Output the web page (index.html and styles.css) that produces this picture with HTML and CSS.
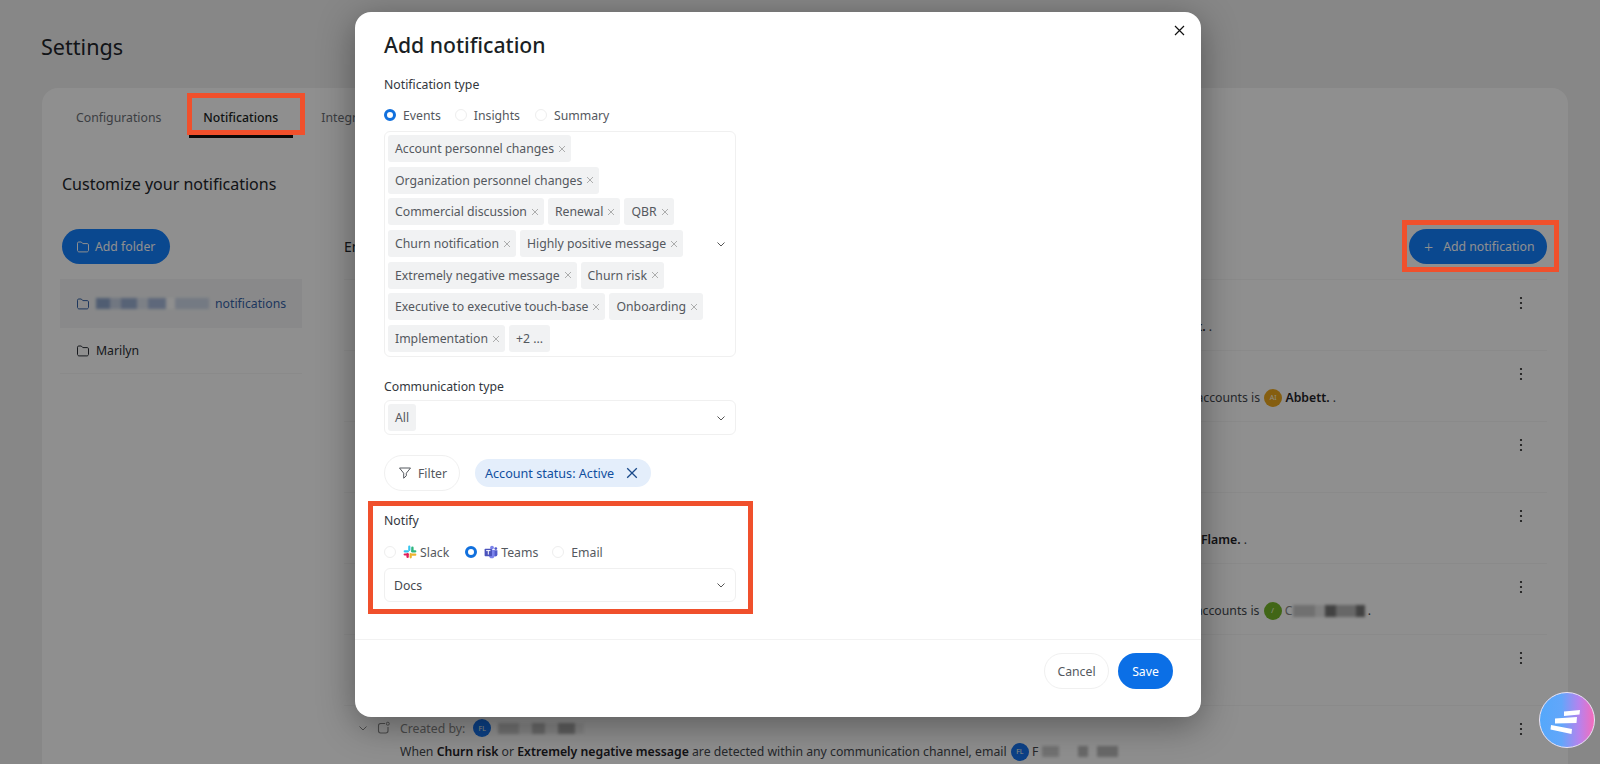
FILE: index.html
```html
<!DOCTYPE html>
<html lang="en">
<head>
<meta charset="utf-8">
<title>Settings - Add notification</title>
<link rel="stylesheet" href="styles.css">
</head>
<body>
<svg class="defs" width="0" height="0" aria-hidden="true">
  <symbol id="folder" viewBox="0 0 14 14"><path d="M1.500 3.200c0-.7.5-1.200 1.200-1.200h2.600l1.500 1.600h4.500c.7 0 1.200.5 1.200 1.200v5.500c0 .9-.7 1.600-1.600 1.600H3.100c-.9 0-1.600-.7-1.600-1.600z" fill="none" stroke="currentColor" stroke-width="1" stroke-linejoin="round"/></symbol>
  <symbol id="chev" viewBox="0 0 10 10"><path d="M1.500 3.500 5 7l3.500-3.500" fill="none" stroke="currentColor" stroke-width="1"/></symbol>
  <symbol id="x" viewBox="0 0 10 10"><path d="M2 2l6 6M8 2l-6 6" fill="none" stroke="currentColor" stroke-width=".8"/></symbol>
  <symbol id="dots" viewBox="0 0 4 14"><circle cx="2" cy="2" r="1.100"/><circle cx="2" cy="7" r="1.100"/><circle cx="2" cy="12" r="1.100"/></symbol>
  <symbol id="bell" viewBox="0 0 14 14"><path d="M8 2.500H3.700C2.500 2.500 1.500 3.500 1.500 4.700v5.100c0 1.200 1 2.200 2.200 2.200h5.100c1.200 0 2.200-1 2.200-2.200V6" fill="none" stroke="currentColor" stroke-width="1.100"/><circle cx="10.800" cy="2.700" r="1.500" fill="none" stroke="currentColor" stroke-width="1"/></symbol>
</svg>

<div class="page">
  <h1 class="page-title">Settings</h1>
  <section class="panel">
    <nav class="tabs">
      <span class="tab">Configurations</span>
      <span class="tab tab-active">Notifications<i class="mark mark-tab"></i></span>
      <span class="tab">Integrations</span>
    </nav>
    <div class="columns">
      <aside class="side">
        <h2 class="side-title">Customize your notifications</h2>
        <button class="btn-primary btn-folder"><svg class="ico14"><use href="#folder"/></svg>Add folder</button>
        <ul class="folders">
          <li class="folder folder-on"><svg class="ico14"><use href="#folder"/></svg><span class="smudge smudge-a"></span><span>notifications</span></li>
          <li class="folder folder-plain"><svg class="ico14"><use href="#folder"/></svg><span>Marilyn</span></li>
        </ul>
      </aside>
      <div class="main">
        <div class="toolbar">
          <span class="main-title">En</span>
          <button class="btn-primary btn-add"><span class="plus">+</span>Add notification<i class="mark mark-add"></i></button>
        </div>
        <div class="row">
          <div class="row-body"><div class="desc end-1"><b>Scott.</b>&nbsp;.</div></div>
          <svg class="kebab"><use href="#dots"/></svg>
        </div>
        <div class="row">
          <div class="row-body"><div class="desc end-2">accounts is <span class="avatar av-amber">AI</span>&nbsp;<b>Abbett.</b>&nbsp;.</div></div>
          <svg class="kebab"><use href="#dots"/></svg>
        </div>
        <div class="row">
          <div class="row-body"></div>
          <svg class="kebab"><use href="#dots"/></svg>
        </div>
        <div class="row">
          <div class="row-body"><div class="desc end-4"><b>Flame.</b>&nbsp;.</div></div>
          <svg class="kebab"><use href="#dots"/></svg>
        </div>
        <div class="row">
          <div class="row-body"><div class="desc end-5">accounts is <span class="avatar av-green">/</span>&nbsp;<span class="letter">C</span><span class="smudge smudge-b"></span>&nbsp;.</div></div>
          <svg class="kebab"><use href="#dots"/></svg>
        </div>
        <div class="row">
          <div class="row-body"></div>
          <svg class="kebab"><use href="#dots"/></svg>
        </div>
        <div class="row">
          <div class="row-body row-body-full">
            <div class="meta"><svg class="ico10"><use href="#chev"/></svg><svg class="ico14"><use href="#bell"/></svg><span>Created by:</span><span class="avatar av-blue">FL</span><span class="smudge smudge-c"></span></div>
            <div class="desc desc-start">When&nbsp;<b>Churn risk</b>&nbsp;or&nbsp;<b>Extremely negative message</b>&nbsp;are detected within any communication channel, email <span class="avatar av-blue">FL</span>&nbsp;F<span class="smudge smudge-d"></span></div>
          </div>
          <svg class="kebab"><use href="#dots"/></svg>
        </div>
      </div>
    </div>
  </section>
</div>

<div class="overlay">
  <div class="modal" role="dialog" aria-label="Add notification">
    <div class="modal-body">
      <svg class="close"><use href="#x"/></svg>
      <h2 class="modal-title">Add notification</h2>
      <div class="label">Notification type</div>
      <div class="radios radios-type">
        <label class="radio-item item-events"><i class="radio radio-on"></i>Events</label>
        <label class="radio-item item-insights"><i class="radio"></i>Insights</label>
        <label class="radio-item"><i class="radio"></i>Summary</label>
      </div>
      <div class="select select-multi">
        <div class="tags">
          <span class="tag">Account personnel changes<svg class="tag-x"><use href="#x"/></svg></span>
          <span class="tag">Organization personnel changes<svg class="tag-x"><use href="#x"/></svg></span>
          <span class="tag">Commercial discussion<svg class="tag-x"><use href="#x"/></svg></span>
          <span class="tag">Renewal<svg class="tag-x"><use href="#x"/></svg></span>
          <span class="tag">QBR<svg class="tag-x"><use href="#x"/></svg></span>
          <span class="tag">Churn notification<svg class="tag-x"><use href="#x"/></svg></span>
          <span class="tag">Highly positive message<svg class="tag-x"><use href="#x"/></svg></span>
          <span class="tag">Extremely negative message<svg class="tag-x"><use href="#x"/></svg></span>
          <span class="tag">Churn risk<svg class="tag-x"><use href="#x"/></svg></span>
          <span class="tag">Executive to executive touch-base<svg class="tag-x"><use href="#x"/></svg></span>
          <span class="tag">Onboarding<svg class="tag-x"><use href="#x"/></svg></span>
          <span class="tag">Implementation<svg class="tag-x"><use href="#x"/></svg></span>
          <span class="tag">+2 ...</span>
        </div>
        <svg class="chev"><use href="#chev"/></svg>
      </div>
      <div class="label label-comm">Communication type</div>
      <div class="select select-one">
        <div class="tags"><span class="tag">All</span></div>
        <svg class="chev"><use href="#chev"/></svg>
      </div>
      <div class="filters">
        <button class="btn-filter"><svg class="ico14" viewBox="0 0 14 14"><path d="M1.500 2h11L8.300 7.200v2.600L5.700 12.200V7.200z" fill="none" stroke="currentColor" stroke-width="1" stroke-linejoin="round"/></svg>Filter</button>
        <span class="chip">Account status: Active<svg class="chip-x"><use href="#x"/></svg></span>
      </div>
      <div class="notify">
        <i class="mark mark-notify"></i>
        <div class="label">Notify</div>
        <div class="radios radios-notify">
          <label class="radio-item item-slack"><i class="radio"></i>
            <svg class="brand" viewBox="0 0 14 14"><rect x="5.200" y=".6" width="2.200" height="5.400" rx="1.100" fill="#36c5f0"/><rect x=".6" y="5.200" width="5.400" height="2.200" rx="1.100" fill="#36c5f0"/><rect x="8.200" y="1.600" width="2.400" height="5" rx="1.200" fill="#2eb67d"/><rect x="8" y="5.200" width="5.400" height="2.200" rx="1.100" fill="#2eb67d"/><rect x="6.600" y="8" width="2.200" height="5.400" rx="1.100" fill="#ecb22e"/><rect x="8" y="8.600" width="5.400" height="2.200" rx="1.100" fill="#ecb22e"/><rect x="3.400" y="8" width="2.400" height="5" rx="1.200" fill="#e01e5a"/><rect x=".6" y="8.400" width="5" height="2.200" rx="1.100" fill="#e01e5a"/></svg>Slack</label>
          <label class="radio-item item-teams"><i class="radio radio-on"></i>
            <svg class="brand" viewBox="0 0 14 14"><circle cx="8" cy="2.600" r="1.900" fill="#7b83eb"/><circle cx="11.800" cy="3.600" r="1.400" fill="#5059c9"/><path d="M9.400 5.200h4v4.200a2 2 0 0 1-4 0z" fill="#5059c9"/><path d="M5 5h5.600v5.400a2.800 2.800 0 0 1-5.600 0z" fill="#7b83eb"/><rect x=".6" y="3.800" width="7.400" height="7.400" rx=".8" fill="#4b53bc"/><path d="M2.200 5.600h4.200M4.300 5.600v4" stroke="#fff" stroke-width="1"/></svg>Teams</label>
          <label class="radio-item"><i class="radio"></i>Email</label>
        </div>
        <div class="select select-docs">
          <span class="docs-value">Docs</span>
          <svg class="chev"><use href="#chev"/></svg>
        </div>
      </div>
    </div>
    <div class="modal-foot">
      <button class="btn-cancel">Cancel</button>
      <button class="btn-save">Save</button>
    </div>
  </div>
</div>

<div class="fab" aria-label="Assistant">
  <svg viewBox="0 0 56 56" width="56" height="56"><path d="M25 19.500 41 18l-.5 4.500L25 24zM16 26.500 38 25l-.5 6-21.500.5zM12 33l21 4-.5 5-21-4.500z" fill="#fff"/></svg>
</div>
</body>
</html>
```
FILE: styles.css
```css
* { box-sizing: border-box; }
html, body { margin: 0; height: 100%; }
body {
  overflow: hidden;
  height: 764px;
  background: #f1f1f1;
  font-family: "Noto Sans", "Liberation Sans", sans-serif;
  font-size: 12.25px;
  color: #21252b;
}
.defs { position: absolute; }
button { font: inherit; border: 0; cursor: pointer; }
h1, h2, ul { margin: 0; padding: 0; }
li { list-style: none; }

.page { padding: 33px 32px 0 42px; }
.page-title { font-size: 21.6px; font-weight: 400; line-height: 28px; margin-left: -1px; }
.panel {
  margin-top: 27px;
  height: 700px;
  background: #fff;
  border-radius: 16px;
}
.tabs { display: flex; padding-left: 34px; height: 50px; align-items: flex-end; }
.tab { position: relative; color: #6b6f76; padding-bottom: 11px; line-height: 18px; margin-right: 28px; white-space: nowrap; }
.tab-active {
  color: #1b1f24; font-weight: 500; width: 104px; padding: 0 0 8px 14px;
  border-bottom: 3px solid #111;
}
.mark { position: absolute; display: block; border: 5px solid #f0502c; z-index: 30; pointer-events: none; }
.mark-tab { left: -2px; right: -12px; top: -16px; bottom: 0; }
.mark-add { left: -7px; right: -12px; top: -9px; bottom: -8px; }
.mark-notify { left: -16px; right: -17px; top: -11px; bottom: -12px; }

.columns { display: flex; padding-left: 20px; }
.side { width: 240px; flex: none; margin-right: 42px; }
.side-title { font-size: 16px; font-weight: 400; line-height: 22px; margin-top: 35px; white-space: nowrap; }
.btn-primary {
  position: relative;
  display: inline-flex; align-items: center; height: 35px; border-radius: 18px;
  background: #1280ff; color: #fff; font-size: 12.25px; white-space: nowrap;
}
.btn-folder { margin-top: 34px; padding: 0 14px; gap: 5px; width: 108px; }
.ico14 { width: 14px; height: 14px; flex: none; }
.ico10 { width: 10px; height: 10px; flex: none; }
.folders { margin-top: 15px; margin-left: -2px; border-bottom: 1px solid #f6f6f6; }
.folder { display: flex; align-items: center; gap: 6px; padding-left: 16px; color: #2b2f36; }
.folder-on { background: #f4f5f6; color: #3763a8; height: 49px; }
.folder-plain { height: 45px; }
.smudge { display: inline-block; height: 11px; filter: blur(1.5px); }
.smudge-a { width: 113px; background: linear-gradient(90deg, #8fa6cc 0 12%, #c9d4e6 12% 22%, #9cb0d3 22% 36%, #dde4ef 36% 46%, #a8badb 46% 62%, #fff 62% 70%, #cfd9ea 70%); }
.smudge-b { width: 72px; height: 12px; background: linear-gradient(90deg, #c8c8c8 0 30%, #e6e6e6 30% 45%, #777 45% 60%, #b8b8b8 60% 88%, #777 88%); }
.smudge-c { width: 86px; background: linear-gradient(90deg, #ccc 0 25%, #eee 25% 40%, #bbb 40% 55%, #eee 55% 70%, #aaa 70% 90%, #eee 90%); }
.smudge-d { width: 76px; margin-left: 4px; background: linear-gradient(90deg, #ccc 0 22%, #fff 22% 48%, #bbb 48% 60%, #fff 60% 72%, #bbb 72% 100%); }

.main { flex: 1; margin-right: 21px; min-width: 0; }
.toolbar { display: flex; justify-content: space-between; align-items: center; height: 35px; margin-top: 91px; margin-bottom: 15px; }
.main-title { font-size: 14px; font-weight: 400; white-space: nowrap; }
.btn-add { width: 138px; padding-left: 15px; gap: 10px; }
.plus { font-size: 16px; line-height: 1; font-weight: 300; }
.row { display: flex; height: 71px; border-top: 1px solid #f6f6f6; }
.row-body { flex: 1; min-width: 0; padding-top: 35px; }
.row-body-full { padding-top: 12px; }
.meta { display: flex; align-items: center; height: 20px; gap: 7px; padding-left: 14px; color: #888; }
.meta .ico14 { margin: 0 2px; }
.desc { display: flex; align-items: center; justify-content: flex-end; height: 23px; white-space: pre; overflow: hidden; color: #44484e; }
.row-body-full .desc { margin-top: 2px; }
.desc b { font-weight: 600; color: #1f2328; }
.desc-start { justify-content: flex-start; padding-left: 56px; }
.end-1 { padding-right: 307px; }
.end-2 { padding-right: 183px; }
.end-4 { padding-right: 272px; }
.end-5 { padding-right: 148px; }
.avatar {
  display: inline-flex; align-items: center; justify-content: center;
  width: 18px; height: 18px; margin-left: 1px; border-radius: 50%;
  font-size: 7px; color: #ffe; flex: none;
}
.av-amber { background: #eea81d; }
.av-green { background: #74b72a; }
.av-blue { background: #1674f0; }
.letter { color: #888; }
.kebab { width: 4px; height: 14px; flex: none; fill: #222; margin: 16px 24px 0 0; }

.overlay { position: absolute; inset: 0; z-index: 10; background: rgba(0, 0, 0, .44); padding: 12px 0 0 355px; }
.modal {
  width: 846px; height: 705px; background: #fff; border-radius: 16px;
  box-shadow: 0 8px 36px rgba(0, 0, 0, .38);
  display: flex; flex-direction: column;
  position: relative;
}
.modal-body { position: relative; flex: 1; padding: 19px 465px 0 29px; }
.close { position: absolute; top: 11px; right: 14px; width: 15px; height: 15px; color: #111; }
.modal-title { font-size: 21.2px; font-weight: 500; line-height: 28px; color: #1b1f24; white-space: nowrap; }
.label { line-height: 18px; color: #33373d; }
.modal-title + .label { margin-top: 17px; }
.radios { display: flex; align-items: center; height: 18px; color: #54585e; }
.radios-type { margin-top: 12px; }
.radio-item { display: inline-flex; align-items: center; gap: 7px; white-space: nowrap; }
.item-events { margin-right: 14px; }
.item-insights { margin-right: 15px; }
.radio { display: block; width: 12px; height: 12px; border: 1px solid #eee; border-radius: 50%; flex: none; }
.radio-on { border: 3.5px solid #1170dd; background: #fff; }
.select { position: relative; border: 1px solid #f0f0f0; border-radius: 6px; background: #fff; width: 352px; }
.select-multi { margin-top: 7px; height: 226px; padding: 3px 3px 0 3px; }
.tags { display: flex; flex-wrap: wrap; gap: 4.7px 4px; padding-right: 22px; }
.tag { display: inline-flex; align-items: center; height: 27px; padding: 0 7px; background: #f1f2f3; border-radius: 3px; color: #54585e; white-space: nowrap; }
.tag-x { width: 10px; height: 10px; margin-left: 3px; color: #9a9a9a; margin-right: -3px; }
.chev { position: absolute; right: 9px; top: 50%; margin-top: -5px; width: 10px; height: 10px; color: #555; }
.label-comm { margin-top: 21px; }
.select-one { margin-top: 4px; height: 35px; padding: 3px; }
.filters { display: flex; align-items: center; gap: 15px; margin-top: 20px; }
.btn-filter { display: inline-flex; align-items: center; gap: 6px; width: 76px; height: 36px; padding-left: 13px; border-radius: 18px; background: #fff; border: 1px solid #f0f0f0; color: #54585e; }
.chip { display: inline-flex; align-items: center; width: 176px; height: 28px; padding-left: 10px; border-radius: 14px; background: #e4eefb; color: #114f9f; font-size: 12.6px; white-space: nowrap; }
.chip-x { width: 16px; height: 16px; margin-left: 10px; color: #1a4a8a; }
.notify { position: relative; margin-top: 21px; }
.radios-notify { margin-top: 13px; }
.brand { width: 14px; height: 14px; flex: none; margin-right: -4px; }
.item-slack { margin-right: 16px; }
.item-teams { margin-right: 14px; }
.select-docs { display: flex; align-items: center; height: 34px; margin-top: 7px; padding-left: 9px; }
.docs-value { color: #44484e; }
.modal-foot {
  display: flex; justify-content: flex-end; gap: 9px; align-items: center;
  height: 78px; border-top: 1px solid #f2f2f2; padding: 0 28px 15px 0;
}
.btn-cancel, .btn-save { height: 36px; border-radius: 18px; padding: 0; font-size: 12.25px; }
.btn-cancel { width: 65px; background: #fff; border: 1px solid #f0f0f0; color: #54585e; }
.btn-save { width: 55px; background: #0b6fe6; color: #fff; }
.fab {
  position: absolute; z-index: 40; left: 1539px; top: 692px; width: 56px; height: 56px;
  border-radius: 50%; border: 1px solid #e9e3f6; overflow: hidden;
  background: linear-gradient(90deg, #54a8fb 0%, #62a6fa 40%, #b583ee 72%, #f56cbb 100%);
}
.fab svg { display: block; margin: -1px; }
```
